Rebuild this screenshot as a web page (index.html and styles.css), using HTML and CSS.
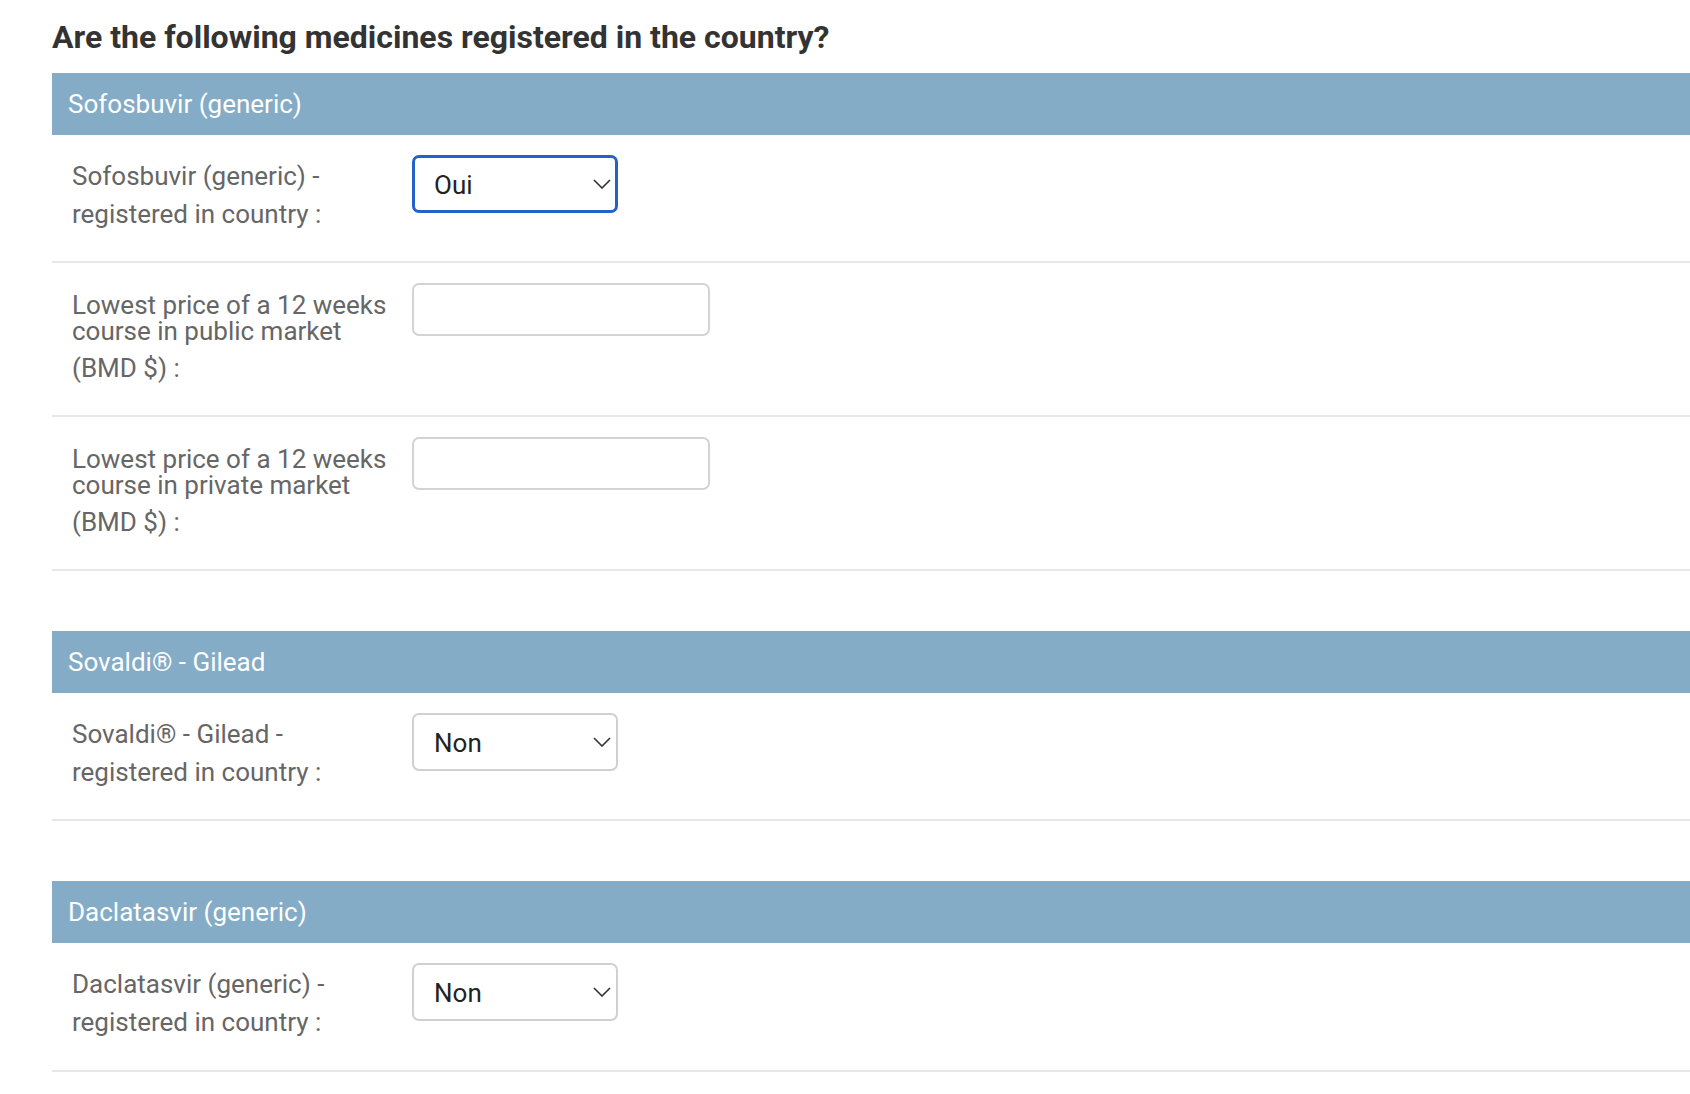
FILE: index.html
```html
<!DOCTYPE html>
<html lang="en">
<head>
<meta charset="utf-8">
<title>Medicines registration</title>
<link rel="stylesheet" href="styles.css">
</head>
<body>
<main class="page">
  <h1 class="title">Are the following medicines registered in the country?</h1>

  <section class="section">
    <div class="section-head">Sofosbuvir (generic)</div>
    <div class="row">
      <label class="label">Sofosbuvir (generic) - registered in country :</label>
      <div class="control">
        <div class="select-wrap">
          <select class="select is-focused"><option>Oui</option><option>Non</option></select>
          <svg class="chevron" width="18" height="10" viewBox="0 0 18 10"><path d="M1 1 L9 9 L17 1" fill="none" stroke="#333" stroke-width="1.6"/></svg>
        </div>
      </div>
    </div>
    <div class="row row--tall">
      <label class="label"><span class="label-main">Lowest price of a 12 weeks course in public market</span><span class="label-unit">(BMD $) :</span></label>
      <div class="control"><input class="input" type="text"></div>
    </div>
    <div class="row row--tall">
      <label class="label"><span class="label-main">Lowest price of a 12 weeks course in private market</span><span class="label-unit">(BMD $) :</span></label>
      <div class="control"><input class="input" type="text"></div>
    </div>
  </section>

  <section class="section">
    <div class="section-head">Sovaldi® - Gilead</div>
    <div class="row">
      <label class="label">Sovaldi® - Gilead - registered in country :</label>
      <div class="control">
        <div class="select-wrap">
          <select class="select"><option>Non</option><option>Oui</option></select>
          <svg class="chevron" width="18" height="10" viewBox="0 0 18 10"><path d="M1 1 L9 9 L17 1" fill="none" stroke="#333" stroke-width="1.6"/></svg>
        </div>
      </div>
    </div>
  </section>

  <section class="section">
    <div class="section-head">Daclatasvir (generic)</div>
    <div class="row">
      <label class="label">Daclatasvir (generic) - registered in country :</label>
      <div class="control">
        <div class="select-wrap">
          <select class="select"><option>Non</option><option>Oui</option></select>
          <svg class="chevron" width="18" height="10" viewBox="0 0 18 10"><path d="M1 1 L9 9 L17 1" fill="none" stroke="#333" stroke-width="1.6"/></svg>
        </div>
      </div>
    </div>
  </section>
</main>
</body>
</html>
```

FILE: styles.css
```css
html, body {
  margin: 0;
  padding: 0;
  background: #fff;
}

body {
  font-family: Roboto, "Liberation Sans", Arial, sans-serif;
  color: #333;
}

.page {
  padding: 0 0 0 52px;
}

.title {
  margin: 0;
  padding: 18px 0 0;
  height: 55px;
  font-size: 32px;
  line-height: 38px;
  font-weight: 700;
  color: #333;
  white-space: nowrap;
}

.section + .section {
  margin-top: 60px;
}

.section-head {
  height: 62px;
  padding-left: 16px;
  background: #84acc6;
  color: #fff;
  font-size: 26px;
  line-height: 62px;
}

.row {
  display: grid;
  grid-template-columns: 340px auto;
  padding: 20px 0 28px 20px;
  border-bottom: 2px solid #e7e7e7;
}

.row--tall {
  padding-bottom: 27px;
}

.label {
  display: block;
  margin-top: 3px;
  font-size: 26px;
  line-height: 37.7px;
  color: #666;
  padding-right: 18px;
}

.label-main {
  display: block;
  line-height: 26px;
  margin-top: 6px;
}

.label-unit {
  display: block;
  margin-top: 6px;
}

.control {
  display: flex;
  align-items: flex-start;
}

.select-wrap {
  position: relative;
  width: 206px;
  height: 58px;
}

.select {
  appearance: none;
  -webkit-appearance: none;
  box-sizing: border-box;
  width: 206px;
  height: 58px;
  margin: 0;
  padding: 2px 30px 0 20px;
  border: 2px solid #d0d0d0;
  border-radius: 7px;
  background: #fff;
  font-family: Roboto, "Liberation Sans", Arial, sans-serif;
  font-size: 26px;
  color: #222;
  outline: none;
}

.select.is-focused {
  border: 3px solid #2362c8;
  padding-left: 19px;
}

.chevron {
  position: absolute;
  right: 7px;
  top: 24px;
  pointer-events: none;
}

.input {
  box-sizing: border-box;
  width: 298px;
  height: 53px;
  margin: 0;
  padding: 0 14px;
  border: 2px solid #d3d3d3;
  border-radius: 7px;
  background: #fff;
  font-family: Roboto, "Liberation Sans", Arial, sans-serif;
  font-size: 24px;
  outline: none;
}
```
